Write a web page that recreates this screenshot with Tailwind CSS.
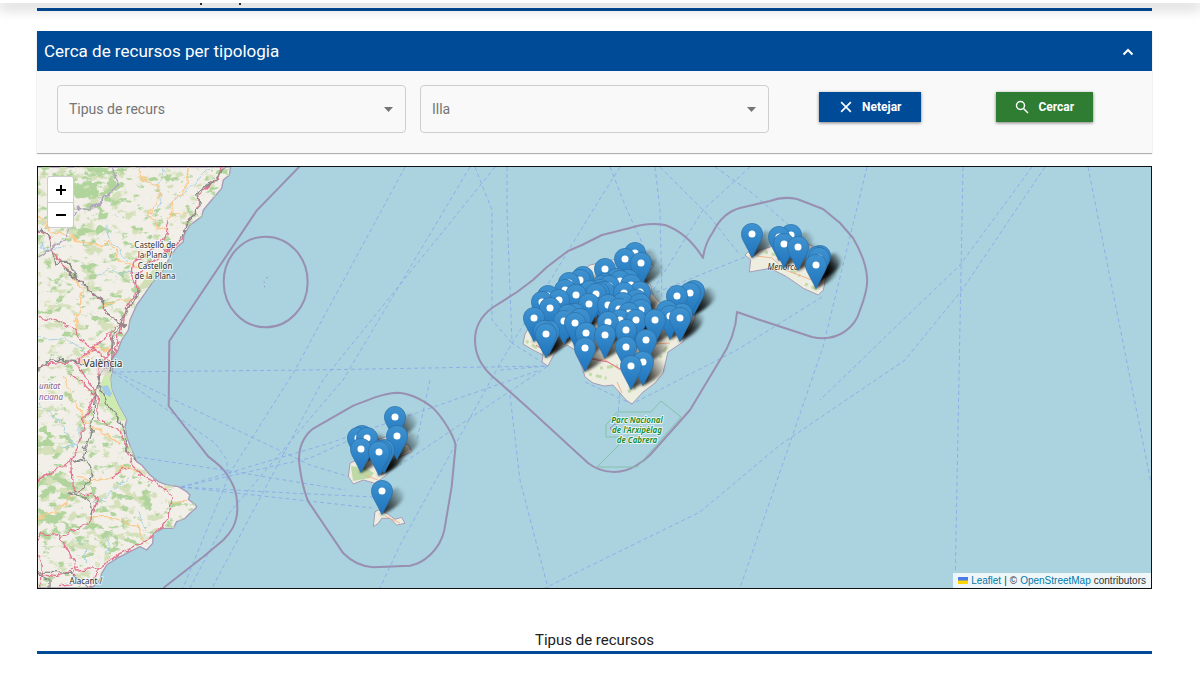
<!DOCTYPE html>
<html lang="ca">
<head>
<meta charset="utf-8">
<meta name="viewport" content="width=device-width, initial-scale=1">
<title>Cerca de recursos</title>
<script src="https://cdn.jsdelivr.net/npm/@tailwindcss/browser@4"></script>
</head>
<body class="bg-white font-[Roboto,sans-serif] text-[#212121] overflow-x-hidden">
<header class="fixed inset-x-0 top-0 z-50 h-[3px] bg-white shadow-[0_3px_14px_2px_rgba(0,0,0,0.24)]"></header>

<main class="ml-[37px] mr-12">
  <div class="flex h-[11px] items-start gap-[37px] border-b-[3px] border-[#004b98] pl-[163px] pt-[3px]" aria-hidden="true">
    <i class="block h-[2px] w-[2px] bg-[#3b2638]"></i>
    <i class="block h-[2px] w-[2px] bg-[#3b2638]"></i>
  </div>

  <section class="mt-5 bg-[#f9f9f9] shadow-[0_1px_1px_rgba(0,0,0,0.3)]">
    <h2>
      <button type="button" aria-expanded="true" class="flex h-10 w-full items-center justify-between bg-[#004b98] pl-[7px] pr-[18px] pt-px text-left text-[17px] text-white">
        <span>Cerca de recursos per tipologia</span>
        <svg class="h-3 w-3" viewBox="0 0 12 12" fill="none" stroke="currentColor" stroke-width="2"><path d="M1.5 8.5 6 4l4.500 4.500"/></svg>
      </button>
    </h2>
    <form class="grid grid-cols-3 gap-[14px] px-5 pt-[14px] pb-5" onsubmit="return false">
      <div class="relative">
        <select aria-label="Tipus de recurs" class="h-12 w-full appearance-none rounded-[4px] border border-[#cfcfcf] bg-transparent px-[11px] text-[14px] text-[#757575]"><option>Tipus de recurs</option></select>
        <svg class="pointer-events-none absolute right-[13px] top-[22px] h-[5px] w-[9px]" viewBox="0 0 9 5" fill="#757575"><path d="M0 0h9L4.500 5z"/></svg>
      </div>
      <div class="relative">
        <select aria-label="Illa" class="h-12 w-full appearance-none rounded-[4px] border border-[#cfcfcf] bg-transparent px-[11px] text-[14px] text-[#757575]"><option>Illa</option></select>
        <svg class="pointer-events-none absolute right-[13px] top-[22px] h-[5px] w-[9px]" viewBox="0 0 9 5" fill="#757575"><path d="M0 0h9L4.500 5z"/></svg>
      </div>
      <div class="grid grid-cols-2 items-start justify-items-center pt-[7px]">
        <button type="button" class="flex h-[30px] items-center gap-[9px] bg-[#004b98] px-5 text-[12px] font-bold text-white shadow-[0_1px_3px_rgba(0,0,0,0.5)]">
          <svg class="h-[14px] w-[14px]" viewBox="0 0 13 13" fill="none" stroke="currentColor" stroke-width="1.500"><path d="m2 2 9 9M11 2l-9 9"/></svg>
          Netejar
        </button>
        <button type="submit" class="flex h-[30px] items-center gap-[9px] bg-[#2e7d32] px-[19px] text-[12px] font-bold text-white shadow-[0_1px_3px_rgba(0,0,0,0.5)]">
          <svg class="h-[14px] w-[14px]" viewBox="0 0 14 14" fill="none" stroke="currentColor" stroke-width="1.500"><circle cx="5.500" cy="5.500" r="4"/><path d="m8.500 8.500 4.500 4.500"/></svg>
          Cercar
        </button>
      </div>
    </form>
  </section>

  <section aria-label="Mapa" class="relative mt-[13px] h-[423px] overflow-hidden border border-[#111] bg-[#aad3df] font-['Noto_Sans',sans-serif]">
    <svg class="h-full w-full" viewBox="38 167 1113 421" preserveAspectRatio="xMidYMid slice">
      <defs>
        <linearGradient id="pin" x1="0" y1="0" x2="0" y2="1"><stop offset="0" stop-color="#3f93d0"/><stop offset="1" stop-color="#1f74bd"/></linearGradient>
        <linearGradient id="shade" x1="0" y1="1" x2="1" y2="0.200"><stop offset="0" stop-color="#000" stop-opacity="0.900"/><stop offset="0.500" stop-color="#000" stop-opacity="0.550"/><stop offset="1" stop-color="#000" stop-opacity="0.040"/></linearGradient>
        <filter id="soft" x="-30%" y="-30%" width="160%" height="160%"><feGaussianBlur stdDeviation="1.800"/></filter>
        <filter id="forest" filterUnits="userSpaceOnUse" x="0" y="0" width="620" height="1300" color-interpolation-filters="sRGB">
          <feGaussianBlur in="SourceGraphic" stdDeviation="18" result="d"/>
          <feTurbulence type="fractalNoise" baseFrequency="0.030 0.045" numOctaves="4" seed="7" result="n"/>
          <feComposite in="d" in2="n" operator="arithmetic" k2="0.260" k3="1"/>
          <feColorMatrix values="0 0 0 0 0.690  0 0 0 0 0.830  0 0 0 0 0.610  0 0 0 9 -5.900"/>
        </filter>
        <filter id="scrub" filterUnits="userSpaceOnUse" x="0" y="0" width="620" height="1300" color-interpolation-filters="sRGB">
          <feGaussianBlur in="SourceGraphic" stdDeviation="18" result="d"/>
          <feTurbulence type="fractalNoise" baseFrequency="0.025 0.035" numOctaves="4" seed="21" result="n"/>
          <feComposite in="d" in2="n" operator="arithmetic" k2="0.200" k3="1"/>
          <feColorMatrix values="0 0 0 0 0.830  0 0 0 0 0.880  0 0 0 0 0.730  0 0 0 9 -5.700"/>
        </filter>
        <filter id="winding" filterUnits="userSpaceOnUse" x="0" y="0" width="620" height="1300">
          <feTurbulence type="fractalNoise" baseFrequency="0.035" numOctaves="3" seed="4"/>
          <feDisplacementMap in="SourceGraphic" scale="26" xChannelSelector="R" yChannelSelector="G"/>
        </filter>
        <path id="coast" d="M22 21H602L598 45 580 60 575 85 545 120 520 150 515 170 480 195 462 225 460 245 440 262 420 290 400 330 365 370 345 400 320 435 300 480 295 510 275 540 262 575 245 600 248 632 241 655 245 690 265 735 290 780 285 800 290 830 305 870 320 905 335 915 360 945 385 965 410 975 445 980 470 995 480 1005 475 1018 497 1035 500 1042 480 1060 465 1075 440 1085 430 1105 400 1105 370 1120 368 1150 350 1170 330 1160 300 1175 260 1195 230 1215 215 1240 210 1260 185 1284H22Z"/>
        <clipPath id="land"><use href="#coast"/></clipPath>
        <g id="density" fill="#000">
          <path d="M0 0H620V1300H0Z" opacity="0.150"/>
          <ellipse cx="190" cy="80" rx="80" ry="60"/><ellipse cx="170" cy="220" rx="55" ry="35" opacity="0.800"/><ellipse cx="60" cy="40" rx="50" ry="40" opacity="0.600"/>
          <ellipse cx="200" cy="330" rx="80" ry="50" opacity="0.250"/><ellipse cx="220" cy="470" rx="50" ry="50" opacity="0.400"/><ellipse cx="70" cy="410" rx="50" ry="50" opacity="0.250"/>
          <ellipse cx="50" cy="850" rx="40" ry="50" opacity="0.700"/><ellipse cx="90" cy="980" rx="85" ry="35" opacity="0.800"/><ellipse cx="60" cy="1080" rx="55" ry="40"/><ellipse cx="260" cy="870" rx="35" ry="35" opacity="0.500"/>
          <ellipse cx="300" cy="1020" rx="100" ry="40" opacity="0.350"/><ellipse cx="200" cy="1130" rx="100" ry="45" opacity="0.450"/>
        </g>
        <g id="marker">
          <path d="M0-10.500C-6-10.500-10.500-6-10.500 0c0 2.600.7 4.800 1.900 7L0 23.500 8.600 7c1.200-2.200 1.900-4.400 1.900-7 0-6-4.500-10.500-10.500-10.500Z" fill="url(#pin)" stroke="#2a6fa8" stroke-width="0.700"/>
          <circle r="3.500" fill="#fff"/>
        </g>
        <path id="shadow" d="M-1 24 3 8Q11-6 18-3 25 2 20 10 13 18-1 24Z" fill="url(#shade)" filter="url(#soft)"/>
      </defs>

      <!-- Mainland -->
      <g transform="translate(30 160) scale(0.33333)" fill="none" stroke-linejoin="round">
        <use href="#coast" fill="#f2efe9" stroke="#a79bb8" stroke-width="4"/>
        <g clip-path="url(#land)">
          <use href="#density" filter="url(#scrub)"/>
          <use href="#density" filter="url(#forest)"/>
          <path d="M205 690 225 640 241 640 250 700 292 782 262 782 215 728Z" fill="#cdebb0"/>
          <path d="M215 680 232 675 246 700 240 712 222 700Z" fill="#a3cbe8"/>
          <path d="M320 390 350 350 395 300 400 330 350 385Z" fill="#cfe0b4"/>
          <g filter="url(#winding)">
            <g stroke="#a8d3e0" stroke-width="3">
              <path d="M400 22 385 80 395 130 360 170M540 30 500 60 470 90 420 140M230 190 240 240 290 300M22 250 60 270 100 260M200 350 230 330 320 340M22 520 60 540 100 535 150 560 200 620"/>
              <path d="M22 730 70 760 110 820 130 860M100 860 150 850 150 800M180 1030 230 1010 300 950M130 1130 170 1170 165 1210M320 1060 350 1110M240 1120 230 1180"/>
            </g>
            <g stroke="#fbc98a" stroke-width="4">
              <path d="M330 12 335 55 390 85 380 130 360 160 385 200 415 215M475 12 470 80 435 120 415 170 465 160M12 150 50 200 100 225 190 255 240 250 270 300 320 320M155 600 195 560 250 580M130 520 150 460 155 390 110 320M225 430 310 415"/>
              <path d="M100 650 140 740 165 780 190 800 270 850M140 950 230 960 290 920 340 945M12 1080 80 1050 130 1010M180 1070 250 1070 320 1100 335 1140M410 1030 470 1020"/>
            </g>
            <g stroke="#e2738f" stroke-width="4">
              <path d="M575 12 565 50 505 110 500 150 470 190 460 240 425 262 370 300 320 340 320 395 290 440 280 490 250 500 245 570 215 610 205 660"/>
              <path d="M415 175 405 230 370 270 310 310 305 360 330 390 275 480 260 560 240 620M12 205 60 225 65 270 110 330 170 380 220 430 225 460 290 500"/>
              <path d="M12 470 80 480 130 510 180 560 240 600M12 630 60 610 140 605 180 570 250 510M140 610 165 650 200 700 160 780 155 830 135 880 125 900 12 970M120 640 205 710 203 775 260 810 290 860 300 910 335 945 385 970 425 1015 415 1060 395 1105 340 1150 270 1180 205 1225 180 1290"/>
              <path d="M125 900 130 990 205 1015 180 1090 90 1130 40 1120 12 1150 40 1220 30 1290M90 1130 120 1180 140 1230 200 1225M12 1240 80 1250 130 1230 150 1270 90 1280M245 950 295 925"/>
            </g>
            <g stroke="#888" stroke-width="4">
              <path d="M590 12 545 70 500 100 508 135 475 185 450 245M320 390 325 400 270 490 250 540 242 630M12 200 55 220 75 310 120 310 140 350 100 330M110 330 215 420 240 470 290 500M12 640 60 600 150 605 240 625M240 600 205 660 200 690 180 830 160 890 130 905M130 905 170 895 190 935 160 985 115 1000 180 1020 190 1060"/>
              <path d="M205 680 240 745 270 780 295 870 315 905M12 1235 60 1260 60 1290M12 1235 120 1240 190 1290"/>
            </g>
            <path d="M240 12 265 70 215 120 180 155 140 140M140 150 100 240 60 270 12 300" stroke="#b0a3bd" stroke-width="5"/>
          </g>
          <path d="M190 600 240 610 235 650 200 640Z" fill="#e6d5d4" fill-opacity="0.600"/>
        </g>
        <g stroke="#998fb0" stroke-width="6">
          <path d="M810 18 680 152 418 543 416 738 535 890C565 912 580 925 592 945 618 985 622 1010 622 1050 620 1095 600 1120 580 1140L520 1190 400 1284"/>
          <ellipse cx="707" cy="366" rx="126" ry="136"/>
        </g>
        <path d="M709 353h4M701 366h3M702 380h3" stroke="#8884b5" stroke-width="3"/>
      </g>

      <!-- Ferry routes -->
      <g fill="none" stroke="#86a5ea" stroke-width="0.800" stroke-dasharray="4 3">
        <path d="M113 372 310 370 548 366M113 372 215 443 227 460V478M118 373 310 465 360 480M137 457 230 471 345 490M181 487 310 458 350 440M181 487 330 443 540 370M181 487 290 493 375 497M181 487 290 499 372 508"/>
        <path d="M405 167 295 370 230 473 183 588M470 167 343 380 230 512 190 588M495 167 323 380 212 588M475 167 492 210 492 320 512 343M507 167 507 210 512 343 548 366M620 167 593 210 502 360 400 545 380 588"/>
        <path d="M610 167 627 210 650 260M655 167 660 210 662 300M750 167 703 210 650 295M650 295 745 257M660 167 710 217 740 255M715 167 752 193 800 235M867 167 823 347 740 588M822 297 737 350 632 404 585 382M963 167 955 588M1088 167 1151 483M1045 167 962 290 905 360 780 445 700 512 545 588M1032 167 960 265 820 400"/>
        <path d="M430 380 417 440M500 370 548 366 500 398 400 465M510 395 520 480 548 588M620 393 617 425"/>
      </g>

      <!-- Maritime limits of the islands -->
      <g fill="none" stroke="#998fb0" stroke-width="2" stroke-linejoin="round">
        <path d="M703 258C695 245 682 231 665 225 653 223 642 224 630 228L602 235 582 245 568 251 547 267 533 280 517 292 492 308C480 317 475 328 475 340 475 354 482 367 492 376L527 407 588 463C602 474 622 475 637 465 642 462 647 458 650 455L690 410 720 360C730 345 736 330 737 312L760 320 812 337C840 343 856 325 860 310 865 297 868 285 867 277 866 262 860 250 853 238L840 223 823 209 797 199Q783 196 770 201L740 208C725 212 718 222 713 232 706 242 704 250 703 258Z"/>
        <path transform="translate(290 380) scale(0.33333)" stroke-width="6" d="M320 38C350 38 395 55 430 85 460 115 490 165 497 195L485 320 463 450C450 510 400 550 360 557L250 562C210 560 180 540 160 520L55 365C40 330 28 270 27 235 28 190 50 155 80 140L190 77 255 52Q290 40 320 38Z"/>
      </g>

      <!-- Islands -->
      <g fill="#eeeee0" stroke="#a79bb8">
        <path d="M523 344 525 334 540 310 560 285 590 265 635 255 654 266 642 276 651 286 652 294 662 305 680 300 695 310 695 318 690 330 683 342 668 352 663 373 655 383 643 392 632 404 626 400 620 393 613 385 604 386 593 383 585 377 583 370 575 350 567 345 557 350 553 356 548 366 542 362 543 355 533 350Z"/>
        <path transform="translate(680 160) scale(0.33333)" stroke-width="3" d="M195 285 205 275 217 292 240 270 290 255 350 235 400 260 420 300 440 340 430 390 415 405 370 385 320 350 270 325 208 336 212 300Z"/>
        <path transform="translate(290 380) scale(0.33333)" stroke-width="3" d="M180 250 175 290 190 312 220 300 255 310 290 285 310 240 365 215 355 195 290 170 230 190 200 240ZM255 395 250 440 265 430 275 415 300 415 320 435 345 430 335 412 315 418 290 400 265 390Z"/>
      </g>
      <g fill="none" stroke-width="3" stroke="#c3dbab" stroke-dasharray="3 4 6 3 2 5">
        <path d="M526 341 537 348M546 355V360M589 374 610 379M600 368 625 365M628 392 636 388M645 375 652 360M660 358 668 345M646 265V280"/>
        <path d="M765 252 780 256M785 266 800 276M805 284 817 289"/>
      </g>
      <path d="M351 466 366 468 374 473 370 478 353 481ZM398 446 406 444 404 452Z" fill="#bfd9a6"/>
      <path d="M575 356 605 360 620 370M622 393 617 382M640 345 670 343M757 256 772 258 785 270 812 280M365 475 378 480M385 516 400 523" fill="none" stroke="#f2b48c"/>
      <path d="M536 345 545 351M592 359 608 362 622 370" fill="none" stroke="#e2738f"/>

      <g fill="none" stroke="#85c1ac"><path d="M606 425 617 412H651L661 401 681 417 637 467H597L619 445V437H606Z"/><path d="M610 428 615 424 618 428 613 432Z" stroke="#998fb0"/></g>

      <!-- Place names -->
      <g font-size="8" text-anchor="middle" fill="#333" stroke="#fff" stroke-opacity="0.700" stroke-width="2" paint-order="stroke" stroke-linejoin="round">
        <text x="155" y="248">Castelló de</text><text x="155" y="258">la Plana /</text><text x="155" y="269">Castellón</text><text x="155" y="279">de la Plana</text>
        <text x="103" y="367" font-size="10">València</text><text x="86" y="584">Alacant /</text>
        <g text-anchor="start" font-style="italic" fill="#84638f"><text x="39" y="389">unitat</text><text x="39" y="400">nciana</text></g>
        <text x="783" y="270" font-style="italic" stroke-opacity="0.300">Menorca</text>
        <g font-style="italic" font-weight="600" fill="#148a1c"><text x="637" y="423">Parc Nacional</text><text x="637" y="433">de l'Arxipèlag</text><text x="637" y="443">de Cabrera</text></g>
      </g>
      <g id="shadows"></g>
      <g id="markers"></g>
    </svg>

    <div class="absolute left-[9px] top-[9px] flex flex-col overflow-hidden rounded-[3px] border border-black/20 bg-white text-black">
      <button type="button" aria-label="Apropa" class="flex h-[26px] w-[25px] items-center justify-center border-b border-[#ccc]"><svg class="h-[10px] w-[10px]" viewBox="0 0 10 10" stroke="currentColor" stroke-width="2"><path d="M0 5h10M5 0v10"/></svg></button>
      <button type="button" aria-label="Allunya" class="flex h-[24px] w-[25px] items-center justify-center"><svg class="h-[10px] w-[10px]" viewBox="0 0 10 10" stroke="currentColor" stroke-width="2"><path d="M0 5h10"/></svg></button>
    </div>
    <div class="absolute bottom-0 right-0 flex h-[15px] items-center gap-[3px] bg-white/80 px-[5px] font-['Liberation_Sans',sans-serif] text-[10px] text-[#333]">
      <svg class="h-[7px] w-[10px]" viewBox="0 0 10 7"><path fill="#4c7be1" d="M0 0h10v4H0z"/><path fill="#ffd500" d="M0 3.500h10V7H0z"/></svg>
      <a href="#" class="text-[#0078a8]">Leaflet</a><span>|</span><span>©</span><a href="#" class="text-[#0078a8]">OpenStreetMap</a><span>contributors</span>
    </div>
  </section>

  <h2 class="mt-10 flex h-[25px] items-start justify-center border-b-[3px] border-[#004b98] text-[15px] leading-[22px]">Tipus de recursos</h2>
</main>

<script>
  const resources = [
    [395,417],[397,436],[358,438],[367,438],[362,436],[361,449],[384,450],[381,451],[379,452],[382,491],
    [752,234],[779,237],[791,235],[784,244],[798,247],[820,256],[817,257],[819,258],[816,265],
    [635,253],[625,259],[641,263],[605,269],[583,277],[580,280],[569,283],[565,290],[576,295],[548,296],[542,302],[559,300],[550,308],
    [534,318],[549,331],[544,331],[546,334],[589,304],[590,291],[620,281],[617,279],[628,280],[631,285],[624,293],[640,292],
    [605,284],[602,286],[609,286],[600,290],[596,294],[604,292],[599,293],[608,305],[619,309],[623,303],[640,304],[641,310],[629,313],[636,300],
    [571,314],[568,315],[575,314],[580,319],[564,321],[575,323],[608,322],[620,320],[636,320],[655,320],
    [586,333],[605,335],[626,330],[626,347],[646,340],[585,348],[643,362],[631,366],
    [677,296],[690,293],[694,291],[667,311],[670,316],[682,314],[680,318]
  ];
  const place = (layer, shape, points) => {
    const g = document.getElementById(layer);
    points.forEach(([x, y]) => {
      const u = document.createElementNS('http://www.w3.org/2000/svg', 'use');
      u.setAttribute('href', shape);
      u.setAttribute('x', x);
      u.setAttribute('y', y);
      g.appendChild(u);
    });
  };
  resources.sort((a, b) => a[1] - b[1]);
  place('shadows', '#shadow', resources);
  place('markers', '#marker', resources);
</script>
</body>
</html>
